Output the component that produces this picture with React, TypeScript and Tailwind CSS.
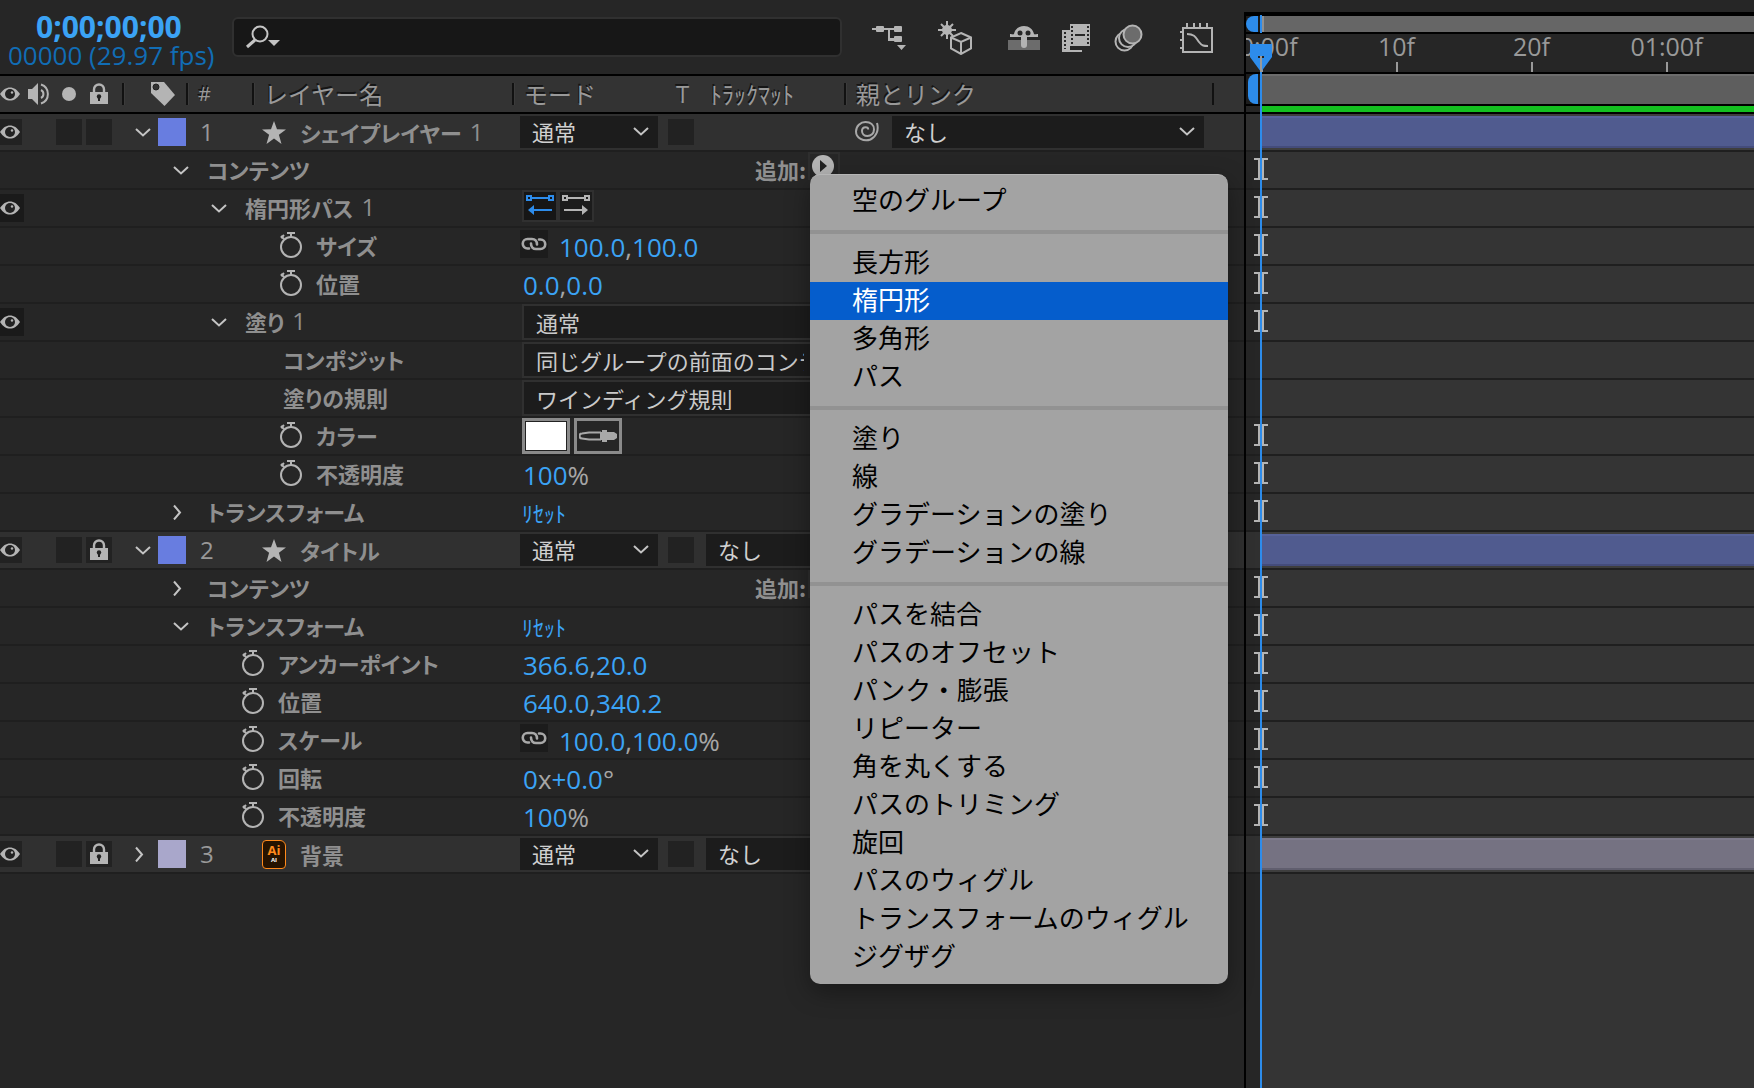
import { useState } from "react";
import type { ReactNode } from "react";
import clsx from "clsx";

type PropertyRow = {
  kind: "group" | "property" | "plain";
  name: string;
  suffix?: string;
  indent: string;
  open?: boolean;
  eye?: boolean;
  keyable?: boolean;
  value?: ReactNode;
};

type Layer = {
  id: number;
  name: string;
  suffix?: string;
  swatch: string;
  bar: string;
  locked: boolean;
  open: boolean;
  icon: ReactNode;
  matte: boolean;
  rows: PropertyRow[];
};

const EyeIcon = () => (
  <svg width="20" height="14" viewBox="0 0 20 14" className="shrink-0">
    <path d="M0 7C3 2.4 6 .4 10 .4S17 2.4 20 7c-3 4.600-6 6.600-10 6.600S3 11.600 0 7Z" fill="#b4b4b4" />
    <circle cx="10" cy="7" r="5" fill="#222" />
    <circle cx="12" cy="5.500" r="1.200" fill="#b4b4b4" />
  </svg>
);

const LockIcon = () => (
  <svg width="18" height="22" viewBox="0 0 18 22">
    <path d="M4 10V6.500a5 5 0 0 1 10 0V10" fill="none" stroke="#b4b4b4" strokeWidth="2.400" />
    <path fill="#b4b4b4" d="M0 9h18v12H0z" />
    <circle cx="9" cy="13.500" r="2.200" fill="#222" />
    <path fill="#222" d="M8 14h2v4H8z" />
  </svg>
);

const SpeakerIcon = () => (
  <svg width="24" height="22" viewBox="0 0 24 22" fill="none" stroke="#b4b4b4" strokeWidth="2">
    <path d="M0 6h4l6-6v22l-6-6H0z" fill="#b4b4b4" stroke="none" />
    <path d="M13 7a4.500 4.500 0 0 1 0 8" />
    <path d="M13 1.500a10 10 0 0 1 0 19" />
  </svg>
);

const TagIcon = () => (
  <svg width="24" height="24" viewBox="0 0 24 24">
    <path d="M0 0h13l11 13-10.500 11L0 11z" fill="#b4b4b4" />
    <circle cx="5" cy="5" r="3" fill="#333" stroke="#222" />
  </svg>
);

const StarIcon = () => (
  <svg width="24" height="23" viewBox="0 0 24 23" className="shrink-0">
    <path d="M12 0l3 8.200 9 .2-7.100 5.400L19.500 23 12 17.400 4.500 23l2.600-9.200L0 8.400l9-.2z" fill="#b4b4b4" />
  </svg>
);

const AiFileIcon = () => (
  <span className="flex h-[29px] w-6 shrink-0 flex-col items-center justify-center rounded-sm rounded-tr-md border border-[#ff8a1c] bg-[#261300] font-['Open_Sans',sans-serif] leading-none">
    <span className="text-[13px] leading-3 font-bold text-[#ff8a1c]">Ai</span>
    <span className="text-[6px] leading-2 font-bold text-white">AI</span>
  </span>
);

const StopwatchIcon = () => (
  <svg width="22" height="26" viewBox="0 0 22 26" fill="none" stroke="#b4b4b4" strokeWidth="2">
    <circle cx="11" cy="15" r="10" />
    <path d="M7 1h8M11 1v4M1 4l3 3M4 3L1 6" />
  </svg>
);

const LinkIcon = () => (
  <svg width="26" height="14" viewBox="0 0 26 14" fill="none" stroke="#a8a8a8" strokeWidth="2.600" strokeLinecap="round">
    <path d="M16 7.500C16 4 14 2 11 2H6.500a4.600 4.600 0 0 0 0 9.500H8" />
    <path d="M10 6.500C10 10 12 12 15 12h4.500a4.600 4.600 0 0 0 0-9.500H18" />
  </svg>
);

const SpiralIcon = () => (
  <svg width="24" height="22" viewBox="0 0 24 22" fill="none" stroke="#a8a8a8" strokeWidth="2">
    <path d="M22 2c2 7-.5 13.500-6.500 16.500C8.500 21 1 17 1 10.500 1 5 5.500 1 10.500 1S19 4 19 8.500c0 4-3 6.500-6.500 6.500S7 12.500 7 10s1.800-3.800 3.600-3.800 2.600 1 2.600 2.300" />
  </svg>
);

const Chevron = ({ open = true, className }: { open?: boolean; className?: string }) => (
  <svg width="16" height="16" viewBox="0 0 16 16" fill="none" stroke="#c4c4c4" strokeWidth="2" className={className}>
    {open ? <path d="M1 5l7 6.500L15 5" /> : <path d="M1 1.500l6 7-6 7" />}
  </svg>
);

const PathDirectionIcon = ({ reverse, color }: { reverse?: boolean; color: string }) => (
  <svg width="28" height="22" viewBox="0 0 28 22" fill="none" stroke={color} strokeWidth="2">
    <path d="M1 1h4v4H1zM23 1h4v4h-4zM5 3h18" />
    {reverse ? <path d="M7 15h19" /> : <path d="M2 15h19" />}
    {reverse ? (
      <path d="M2 15l6-5v10z" fill={color} stroke="none" />
    ) : (
      <path d="M26 15l-6-5v10z" fill={color} stroke="none" />
    )}
  </svg>
);

const EyedropperIcon = () => (
  <svg width="38" height="14" viewBox="0 0 38 14">
    <path d="M22 3.500H10L3 4.500a2.500 2.500 0 0 0 0 5l7 1h12" fill="none" stroke="#a8a8a8" strokeWidth="2" />
    <path d="M21 3h2V1h5v2h7l3 2v4l-3 2h-7v2h-5v-2h-2z" fill="#a8a8a8" />
  </svg>
);

const toolIcons: { label: string; className: string; icon: ReactNode }[] = [
  {
    label: "ミニフローチャート",
    className: "mr-8",
    icon: (
      <svg width="34" height="32" viewBox="0 0 34 32" fill="#b4b4b4">
        <path d="M0 6h30v2H0zM16 7h2v12h6v-2h-6v2h-2z" />
        <rect x="4" y="4" width="8" height="6" rx="1" />
        <rect x="22" y="4" width="8" height="6" rx="1" />
        <rect x="22" y="14" width="8" height="6" rx="1" />
        <path d="M16 16h8v2h-8zM25 23h9l-4.500 5z" />
      </svg>
    ),
  },
  {
    label: "ドラフト 3D",
    className: "mr-9",
    icon: (
      <svg width="34" height="34" viewBox="0 0 34 34" fill="none" stroke="#b4b4b4" strokeWidth="2">
        <path d="M9 0v18M0 9h18M3 3l12 12M15 3L3 15" />
        <circle cx="9" cy="9" r="4" fill="#b4b4b4" />
        <path d="M23 12l10 4.500v11L23 33l-10-5.500v-11zM13 16.500L23 21l10-4.500M23 21v12" fill="#272727" />
      </svg>
    ),
  },
  {
    label: "シャイレイヤー",
    className: "mr-[22px]",
    icon: (
      <svg width="32" height="26" viewBox="0 0 32 26">
        <path d="M0 15h32v10H0z" fill="#6c6c6c" />
        <path d="M2 9c2 0 3 1 4 0C7 4 11 1 16 1s9 3 10 8c1 1 2 0 4 0v3H2z" fill="#b4b4b4" />
        <circle cx="12" cy="8" r="2.500" fill="#272727" />
        <circle cx="20" cy="8" r="2.500" fill="#272727" />
        <path d="M13 11h6v9a3 3 0 0 1-6 0z" fill="#b4b4b4" />
      </svg>
    ),
  },
  {
    label: "フレームブレンド",
    className: "mr-6",
    icon: (
      <svg width="28" height="28" viewBox="0 0 28 28">
        <path d="M0 6h8v20h12v2H0z" fill="#b4b4b4" />
        <path d="M8 0h20v22H8z" fill="#b4b4b4" />
        <path d="M10 2v20M26 2v20M3 8v17" stroke="#272727" strokeWidth="2" strokeDasharray="2 2" />
        <path d="M13 11h10" stroke="#272727" strokeWidth="2" />
      </svg>
    ),
  },
  {
    label: "モーションブラー",
    className: "mr-9",
    icon: (
      <svg width="30" height="28" viewBox="0 0 30 28" stroke="#b4b4b4" strokeWidth="2" fill="#272727">
        <circle cx="10.500" cy="17.500" r="9" />
        <circle cx="14" cy="14" r="9" />
        <circle cx="18.500" cy="10.500" r="9" fill="#6c6c6c" />
      </svg>
    ),
  },
  {
    label: "グラフエディター",
    className: "",
    icon: (
      <svg width="34" height="30" viewBox="0 0 34 30" fill="none" stroke="#b4b4b4" strokeWidth="2">
        <path d="M3 5h29v24H3zM7 0v5M14 0v5M20 0v5M27 0v5M0 9h3M0 17h3M0 25h3" />
        <path d="M7 11c8 0 9 4 12 8s5 4 9 4" />
      </svg>
    ),
  },
];

const Num = ({ children }: { children: ReactNode }) => (
  <button className="text-[#3ba3f5]">{children}</button>
);

const Values = ({ children }: { children: ReactNode }) => (
  <span className="flex items-center pt-px pl-[3px] font-['Open_Sans',sans-serif] text-[26px] leading-8 text-[#a6a6a6]">
    {children}
  </span>
);

const Reset = () => <button className="pl-[2px] text-[22px] leading-8 text-[#3ba3f5]">ﾘｾｯﾄ</button>;

const ConstrainButton = () => (
  <button aria-label="縦横比を固定" className="mr-2 mb-1 flex h-7 w-7 items-center justify-center bg-[#1c1c1c]">
    <LinkIcon />
  </button>
);

const PropertySelect = ({ label, value }: { label: string; value: string }) => (
  <span className="relative ml-[2px] w-[316px]">
    <select
      aria-label={label}
      className="block h-9 w-full appearance-none border-2 border-[#303030] bg-[#1c1c1c] pr-8 pb-1 pl-3 text-[22px] text-[#cacaca]"
    >
      <option>{value}</option>
    </select>
    <Chevron className="pointer-events-none absolute top-[10px] right-3" />
  </span>
);

const AddContents = () => (
  <span className="flex h-full items-center pl-[235px] text-[22px] font-bold text-[#8f8f8f]">
    <span className="pb-[2px]">追加:</span>
    <button aria-label="追加メニューを開く" className="ml-[2px] flex h-7 w-8 items-center self-start border-2 border-[#2e2e2e] pl-[2px]">
      <svg width="22" height="22" viewBox="0 0 22 22">
        <circle cx="11" cy="11" r="11" fill="#b4b4b4" />
        <path d="M8 5l7 6-7 6z" fill="#222" />
      </svg>
    </button>
  </span>
);

const PathDirection = () => (
  <span className="mb-1 ml-[2px] flex border-2 border-[#303030]">
    <button aria-label="パスの方向を反転" className="flex h-7 w-8 items-center justify-center bg-[#161616]">
      <PathDirectionIcon reverse color="#2d8ceb" />
    </button>
    <span className="w-1 bg-[#303030]" />
    <button aria-label="パスの方向を標準" className="flex h-7 w-8 items-center justify-center bg-[#1c1c1c]">
      <PathDirectionIcon color="#b4b4b4" />
    </button>
  </span>
);

const FillColor = () => (
  <span className="ml-[2px] flex gap-1">
    <button aria-label="塗りのカラー" className="h-9 w-12 border-[3px] border-[#8a8a8a] bg-[#222] p-px">
      <span className="block h-full w-full bg-white" />
    </button>
    <button aria-label="スポイト" className="flex h-9 w-12 items-center justify-center border-[3px] border-[#8a8a8a]">
      <EyedropperIcon />
    </button>
  </span>
);

const layers: Layer[] = [
  {
    id: 1,
    name: "シェイプレイヤー",
    suffix: "1",
    swatch: "bg-[#687de0]",
    bar: "border-t-[#57629a] border-b-[#444c7b] bg-[#505b8f]",
    locked: false,
    open: true,
    icon: <StarIcon />,
    matte: false,
    rows: [
      { kind: "group", name: "コンテンツ", indent: "pl-[149px]", open: true, keyable: true, value: <AddContents /> },
      { kind: "group", name: "楕円形パス", suffix: "1", indent: "pl-[187px]", open: true, eye: true, keyable: true, value: <PathDirection /> },
      {
        kind: "property",
        name: "サイズ",
        indent: "pl-[256px]",
        keyable: true,
        value: (
          <>
            <ConstrainButton />
            <Values>
              <Num>100.0</Num>,<Num>100.0</Num>
            </Values>
          </>
        ),
      },
      {
        kind: "property",
        name: "位置",
        indent: "pl-[256px]",
        keyable: true,
        value: (
          <Values>
            <Num>0.0</Num>,<Num>0.0</Num>
          </Values>
        ),
      },
      { kind: "group", name: "塗り", suffix: "1", indent: "pl-[187px]", open: true, eye: true, keyable: true, value: <PropertySelect label="塗りの描画モード" value="通常" /> },
      { kind: "plain", name: "コンポジット", indent: "pl-[259px]", value: <PropertySelect label="コンポジット" value="同じグループの前面のコンテンツの下" /> },
      { kind: "plain", name: "塗りの規則", indent: "pl-[259px]", value: <PropertySelect label="塗りの規則" value="ワインディング規則" /> },
      { kind: "property", name: "カラー", indent: "pl-[256px]", keyable: true, value: <FillColor /> },
      {
        kind: "property",
        name: "不透明度",
        indent: "pl-[256px]",
        keyable: true,
        value: (
          <Values>
            <Num>100</Num>%
          </Values>
        ),
      },
      { kind: "group", name: "トランスフォーム", indent: "pl-[149px]", open: false, keyable: true, value: <Reset /> },
    ],
  },
  {
    id: 2,
    name: "タイトル",
    swatch: "bg-[#687de0]",
    bar: "border-t-[#57629a] border-b-[#444c7b] bg-[#505b8f]",
    locked: true,
    open: true,
    icon: <StarIcon />,
    matte: true,
    rows: [
      { kind: "group", name: "コンテンツ", indent: "pl-[149px]", open: false, keyable: true, value: <AddContents /> },
      { kind: "group", name: "トランスフォーム", indent: "pl-[149px]", open: true, keyable: true, value: <Reset /> },
      {
        kind: "property",
        name: "アンカーポイント",
        indent: "pl-[218px]",
        keyable: true,
        value: (
          <Values>
            <Num>366.6</Num>,<Num>20.0</Num>
          </Values>
        ),
      },
      {
        kind: "property",
        name: "位置",
        indent: "pl-[218px]",
        keyable: true,
        value: (
          <Values>
            <Num>640.0</Num>,<Num>340.2</Num>
          </Values>
        ),
      },
      {
        kind: "property",
        name: "スケール",
        indent: "pl-[218px]",
        keyable: true,
        value: (
          <>
            <ConstrainButton />
            <Values>
              <Num>100.0</Num>,<Num>100.0</Num>%
            </Values>
          </>
        ),
      },
      {
        kind: "property",
        name: "回転",
        indent: "pl-[218px]",
        keyable: true,
        value: (
          <Values>
            <Num>0</Num>x<Num>+0.0</Num>°
          </Values>
        ),
      },
      {
        kind: "property",
        name: "不透明度",
        indent: "pl-[218px]",
        keyable: true,
        value: (
          <Values>
            <Num>100</Num>%
          </Values>
        ),
      },
    ],
  },
  {
    id: 3,
    name: "背景",
    swatch: "bg-[#a9a7cb]",
    bar: "border-t-[#7c798a] border-b-[#605e6e] bg-[#757282]",
    locked: true,
    open: false,
    icon: <AiFileIcon />,
    matte: true,
    rows: [],
  },
];

const menuGroups = [
  ["空のグループ"],
  ["長方形", "楕円形", "多角形", "パス"],
  ["塗り", "線", "グラデーションの塗り", "グラデーションの線"],
  [
    "パスを結合",
    "パスのオフセット",
    "パンク・膨張",
    "リピーター",
    "角を丸くする",
    "パスのトリミング",
    "旋回",
    "パスのウィグル",
    "トランスフォームのウィグル",
    "ジグザグ",
  ],
];

const ticks = ["00:00f", "10f", "20f", "01:00f"];

const headerCell =
  "flex h-[22px] shrink-0 items-center border-l-2 border-[#111] shadow-[inset_1px_0_0_#3c3c3c]";

function RowName({ name, suffix }: { name: string; suffix?: string }) {
  return (
    <span className="flex text-[22px] leading-8 font-bold whitespace-nowrap text-[#8f8f8f] [font-feature-settings:'palt']">
      {name}
      {suffix && <span className="ml-2 font-['Open_Sans',sans-serif] text-2xl leading-8 font-normal">{suffix}</span>}
    </span>
  );
}

function LayerSelect({ label, value, className }: { label: string; value: string; className: string }) {
  return (
    <span className={clsx("relative shrink-0", className)}>
      <select
        aria-label={label}
        className="block h-8 w-full appearance-none bg-[#1c1c1c] pr-8 pb-[2px] pl-3 text-[22px] leading-7 text-[#d0d0d0]"
      >
        <option>{value}</option>
      </select>
      <Chevron className="pointer-events-none absolute top-[7px] right-[9px]" />
    </span>
  );
}

function LayerRow({ layer }: { layer: Layer }) {
  return (
    <div className="flex h-[38px] items-center border-b-2 border-[#1f1f1f] bg-[#303030]">
      <div className="flex w-[520px] shrink-0 items-center">
        <button aria-label="ビデオ表示" className="mr-[34px] flex h-[26px] w-[22px] items-center bg-[#222]">
          <EyeIcon />
        </button>
        <button aria-label="ソロ" className="mr-1 h-[26px] w-[26px] bg-[#222]" />
        <button aria-label="ロック" className="mr-[23px] flex h-[26px] w-[26px] items-center justify-center bg-[#222]">
          {layer.locked && <LockIcon />}
        </button>
        <button aria-label="レイヤーを展開" className="mr-[7px]">
          <Chevron open={layer.open} />
        </button>
        <button aria-label="ラベルカラー" className={clsx("h-7 w-7", layer.swatch)} />
        <span className="w-[76px] pl-[14px] font-['Open_Sans',sans-serif] text-2xl leading-8 text-[#999]">
          {layer.id}
        </span>
        <span className="flex w-[38px]">{layer.icon}</span>
        <RowName name={layer.name} suffix={layer.suffix} />
      </div>
      <LayerSelect label="描画モード" value="通常" className="mr-[10px] w-[138px]" />
      <button aria-label="透明部分を保持" className="mr-3 h-[26px] w-[26px] shrink-0 bg-[#222]" />
      <span className="flex w-[149px] shrink-0">
        {layer.matte && <LayerSelect label="トラックマット" value="なし" className="w-[140px]" />}
      </span>
      <button aria-label="ピックウイップ" className="mr-[13px]">
        <SpiralIcon />
      </button>
      <LayerSelect label="親レイヤー" value="なし" className="w-[312px]" />
    </div>
  );
}

function PropertyLine({ row }: { row: PropertyRow }) {
  return (
    <div className="flex h-[38px] items-center border-b-2 border-[#1f1f1f]">
      <div className="flex w-[520px] shrink-0 items-center">
        <span className="w-6 shrink-0">
          {row.eye && (
            <button aria-label="表示" className="flex h-7 w-6 items-center bg-[#1a1a1a]">
              <EyeIcon />
            </button>
          )}
        </span>
        <span className={clsx("flex items-center", row.indent)}>
          {row.kind === "group" && (
            <button aria-label="展開" className="mr-[18px]">
              <Chevron open={row.open} />
            </button>
          )}
          {row.kind === "property" && (
            <button aria-label="ストップウォッチ" className="mr-[14px] pb-[2px]">
              <StopwatchIcon />
            </button>
          )}
          <span className="pb-[3px]">
            <RowName name={row.name} suffix={row.suffix} />
          </span>
        </span>
      </div>
      {row.value}
    </div>
  );
}

function Toolbar() {
  return (
    <div className="flex h-[76px] items-center border-b-2 border-black">
      <div className="w-[232px] shrink-0 pt-2 pl-2 font-['Open_Sans',sans-serif]">
        <button className="block pl-7 text-[30px] leading-7 font-bold text-[#3ba3f5]">0;00;00;00</button>
        <span className="block text-[26px] leading-7 whitespace-nowrap text-[#116db5]">00000 (29.97 fps)</span>
      </div>
      <label className="mr-[30px] flex h-10 w-[610px] items-center rounded-md border-2 border-[#303030] bg-[#171717] pl-3">
        <svg width="34" height="24" viewBox="0 0 34 24" fill="none" stroke="#c4c4c4" strokeWidth="2">
          <circle cx="14" cy="9" r="7.500" />
          <path d="M9 15l-8 7" strokeWidth="3" />
          <path d="M22 15h12l-6 6z" fill="#c4c4c4" stroke="none" />
        </svg>
        <input aria-label="検索" type="text" className="ml-2 min-w-0 flex-1 bg-transparent text-[22px] text-[#cacaca] outline-none" />
      </label>
      {toolIcons.map((tool) => (
        <button key={tool.label} aria-label={tool.label} className={clsx("shrink-0 pt-[2px]", tool.className)}>
          {tool.icon}
        </button>
      ))}
    </div>
  );
}

function ColumnHeader() {
  return (
    <div className="flex h-[38px] items-center border-b-2 border-black bg-[#333] text-2xl text-[#999] [text-shadow:-1px_-2px_0_#151515]">
      <div className="flex w-[122px] shrink-0 items-center">
        <EyeIcon />
        <span className="mr-[10px] ml-2 flex">
          <SpeakerIcon />
        </span>
        <span className="mr-[14px] h-[14px] w-[14px] rounded-full bg-[#b4b4b4]" />
        <LockIcon />
      </div>
      <div className={clsx(headerCell, "w-16 pl-[27px]")}>
        <TagIcon />
      </div>
      <div className={clsx(headerCell, "w-[66px] pl-[10px] font-['Open_Sans',sans-serif] text-xl")}>#</div>
      <div className={clsx(headerCell, "w-[260px] pl-[10px]")}>レイヤー名</div>
      <div className={clsx(headerCell, "w-[332px] pl-[10px]")}>
        <span className="w-[152px]">モード</span>
        <span className="w-[34px] font-['Open_Sans',sans-serif]">T</span>
        <span>ﾄﾗｯｸﾏｯﾄ</span>
      </div>
      <div className={clsx(headerCell, "w-[368px] pl-[10px]")}>親とリンク</div>
      <div className={headerCell} />
    </div>
  );
}

function ShapeMenu() {
  const [active, setActive] = useState("楕円形");

  return (
    <div
      role="menu"
      className="absolute top-[174px] left-[810px] w-[418px] rounded-[10px] border-t border-[#b5b5b5] bg-[#a3a3a3] pt-[7px] pb-2 shadow-[0_8px_24px_rgba(0,0,0,0.35)]"
    >
      {menuGroups.map((group, i) => (
        <div key={group[0]}>
          {i > 0 && <div className="my-[10px] h-1 bg-[#929292]" />}
          {group.map((item) => (
            <button
              key={item}
              role="menuitem"
              onMouseEnter={() => setActive(item)}
              className={clsx(
                "block h-[38px] w-full pb-1 pl-[42px] text-left text-[26px] leading-8 whitespace-nowrap",
                item === active ? "bg-[#055dcc] text-white" : "text-black"
              )}
            >
              {item}
            </button>
          ))}
        </div>
      ))}
    </div>
  );
}

const KeyframeBeam = () => (
  <svg width="14" height="22" viewBox="0 0 14 22" fill="#b4b4b4" className="mb-[2px] ml-2">
    <path d="M0 0h14v2h-4v18h4v2H0v-2h4V2H0z" />
  </svg>
);

function Timeline() {
  return (
    <div className="relative mt-3 flex flex-col overflow-hidden border-l-2 border-black">
      <div className="flex h-[22px] border-t-4 border-b-2 border-black bg-[#1c1c1c]">
        <span className="mr-[2px] w-3 rounded-l-full bg-[#2d8ceb]" />
        <span className="flex-1 border-l-4 border-[#8f8f8f] bg-[#666]" />
      </div>
      <div className="-ml-[52px] flex h-[38px] bg-[#262626]">
        {ticks.map((tick) => (
          <span
            key={tick}
            className="flex w-[135px] shrink-0 flex-col items-center justify-between font-['Open_Sans',sans-serif] text-[25px] leading-6 text-[#999]"
          >
            {tick}
            <span className="h-[10px] w-[2px] bg-[#999]" />
          </span>
        ))}
      </div>
      <div className="flex h-[34px] border-y-2 border-black bg-[#1c1c1c]">
        <span className="mr-[2px] ml-[2px] w-[10px] rounded-l-lg bg-[#2d8ceb]" />
        <span className="flex-1 border-t-2 border-t-[#6c6c6c] bg-[#5e5e5e]" />
      </div>
      <div className="flex h-2 border-b-2 border-black bg-[#262626] pl-[15px]">
        <span className="flex-1 bg-[#14c020]" />
      </div>
      {layers.map((layer) => (
        <div key={layer.id}>
          <div className="flex h-[38px] border-b-2 border-[#1f1f1f] bg-[linear-gradient(90deg,#303030_15px,#3e3e3e_15px)] py-[2px] pl-[15px]">
            <span className={clsx("flex-1 border-y-2", layer.bar)} />
          </div>
          {layer.rows.map((row, i) => (
            <div
              key={i}
              className="flex h-[38px] items-center border-b-2 border-[#1f1f1f] bg-[linear-gradient(90deg,#262626_15px,#343434_15px)]"
            >
              {row.keyable && <KeyframeBeam />}
            </div>
          ))}
        </div>
      ))}
      <div className="flex-1 bg-[linear-gradient(90deg,#262626_15px,#343434_15px)]" />

      {/* current time indicator */}
      <span className="absolute top-[3px] left-[14px] h-[18px] w-[2px] bg-[#2d8ceb]" />
      <span className="absolute top-[59px] bottom-0 left-[14px] w-[2px] bg-[#2d8ceb]" />
      <svg width="22" height="28" viewBox="0 0 22 28" className="absolute top-8 left-1">
        <path d="M0 0h22v13L11 28 0 13z" fill="#2d8ceb" />
        <path d="M8 12h6v2H8z" fill="#222" />
        <path d="M10 12h2v16h-2z" fill="#999" />
      </svg>
    </div>
  );
}

const App: React.FC = () => {
  return (
    <div
      lang="ja"
      className="relative grid min-h-screen grid-cols-[minmax(0,1244px)_minmax(0,1fr)] overflow-hidden bg-[#262626] font-['Noto_Sans_CJK_JP',sans-serif]"
    >
      <div className="overflow-hidden">
        <Toolbar />
        <ColumnHeader />
        {layers.map((layer) => (
          <div key={layer.id}>
            <LayerRow layer={layer} />
            {layer.rows.map((row, i) => (
              <PropertyLine key={i} row={row} />
            ))}
          </div>
        ))}
      </div>
      <Timeline />
      <ShapeMenu />
    </div>
  );
};

export default App;
